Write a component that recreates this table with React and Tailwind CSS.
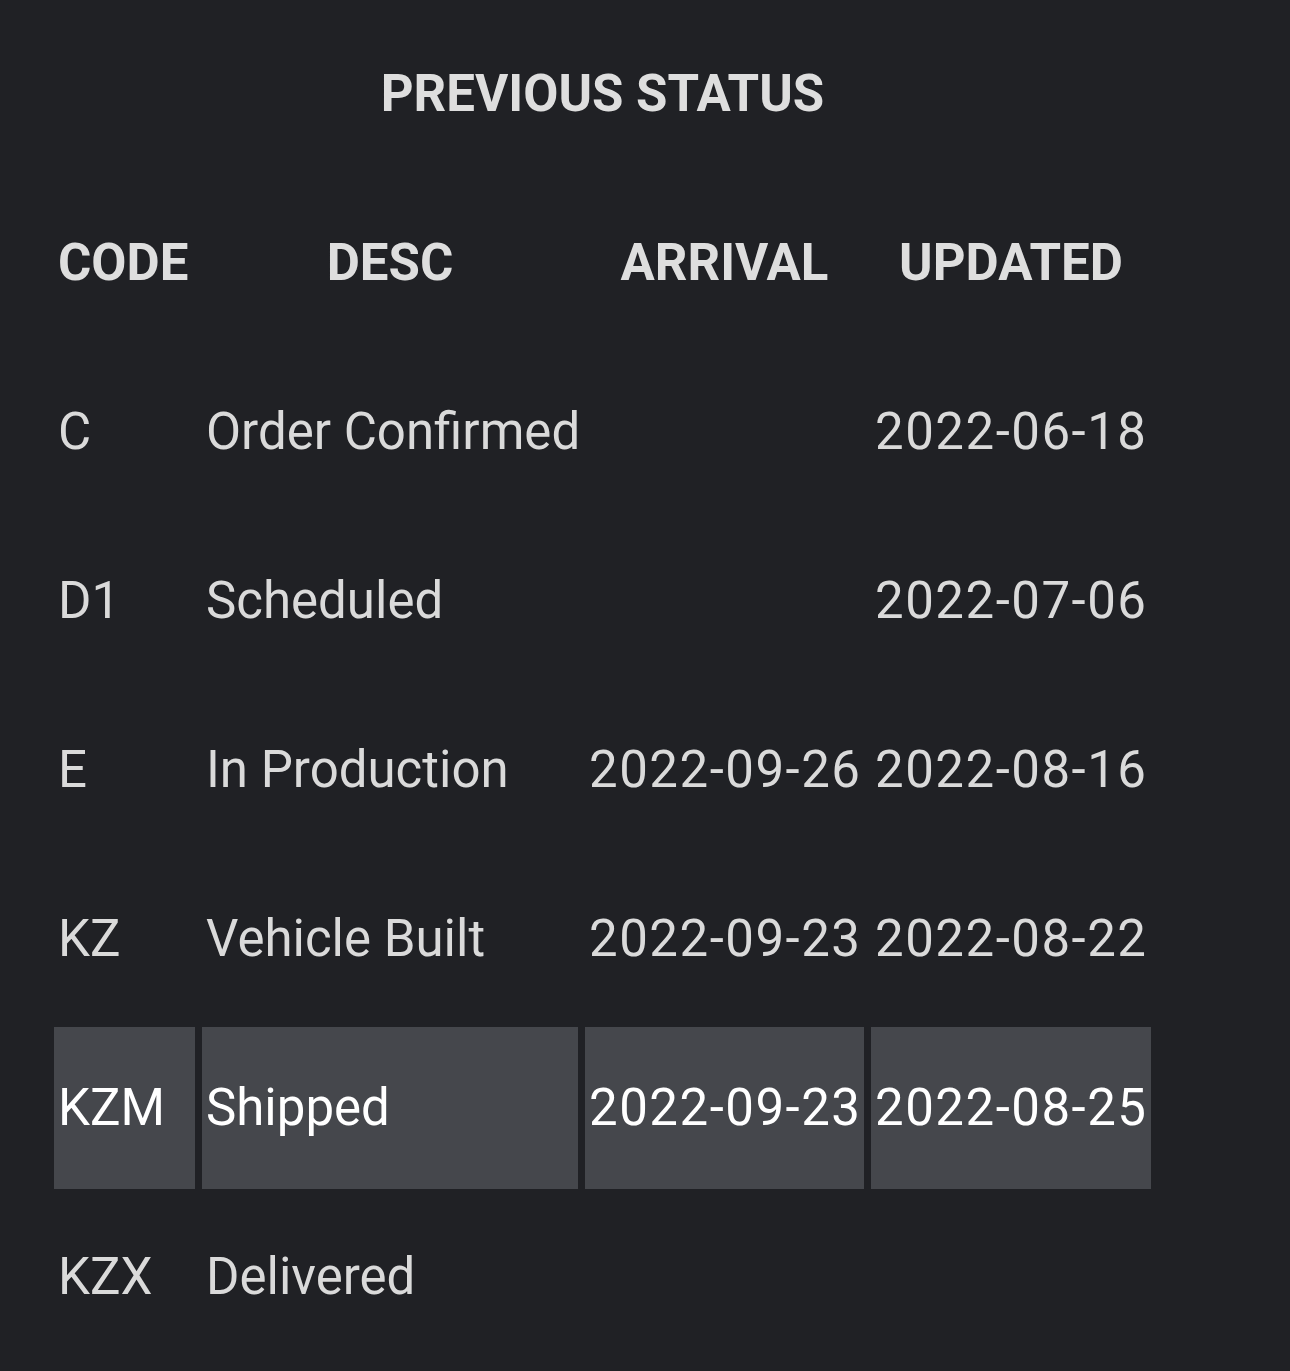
const rows = [
  { code: 'C', desc: 'Order Confirmed', arrival: '', updated: '2022-06-18' },
  { code: 'D1', desc: 'Scheduled', arrival: '', updated: '2022-07-06' },
  { code: 'E', desc: 'In Production', arrival: '2022-09-26', updated: '2022-08-16' },
  { code: 'KZ', desc: 'Vehicle Built', arrival: '2022-09-23', updated: '2022-08-22' },
  { code: 'KZM', desc: 'Shipped', arrival: '2022-09-23', updated: '2022-08-25', current: true },
  { code: 'KZX', desc: 'Delivered', arrival: '', updated: '' },
]

export default function App() {
  return (
    <div
      className="min-h-screen w-full bg-[#202125] pl-[47px]"
      style={{ fontFamily: 'Roboto, "Liberation Sans", sans-serif' }}
    >
      <div className="w-[1111px] h-[175px] pt-[64px] text-center text-[51px] leading-[60px] font-bold text-[#dedede]">
        PREVIOUS STATUS
      </div>
      <table className="table-fixed border-separate border-spacing-[7px] w-[1111px]">
        <colgroup>
          <col className="w-[141px]" />
          <col className="w-[376px]" />
          <col className="w-[279px]" />
          <col className="w-[280px]" />
        </colgroup>
        <thead>
          <tr className="h-[162px] text-[51px] font-bold text-[#dedede]">
            <th className="p-0 px-1 text-left">CODE</th>
            <th className="p-0 px-1 text-center">DESC</th>
            <th className="p-0 px-1 text-center">ARRIVAL</th>
            <th className="p-0 px-1 text-center">UPDATED</th>
          </tr>
        </thead>
        <tbody>
          {rows.map(r => {
            const cell = r.current
              ? 'p-0 px-1 bg-[#45474c] text-white whitespace-nowrap'
              : 'p-0 px-1 text-[#dadada] whitespace-nowrap'
            return (
              <tr key={r.code} className="h-[162px] text-[51px]">
                <td className={cell}>{r.code}</td>
                <td className={cell}>{r.desc}</td>
                <td className={cell + ' tracking-[1.5px]'}>{r.arrival}</td>
                <td className={cell + ' tracking-[1.5px]'}>{r.updated}</td>
              </tr>
            )
          })}
        </tbody>
      </table>
    </div>
  )
}
